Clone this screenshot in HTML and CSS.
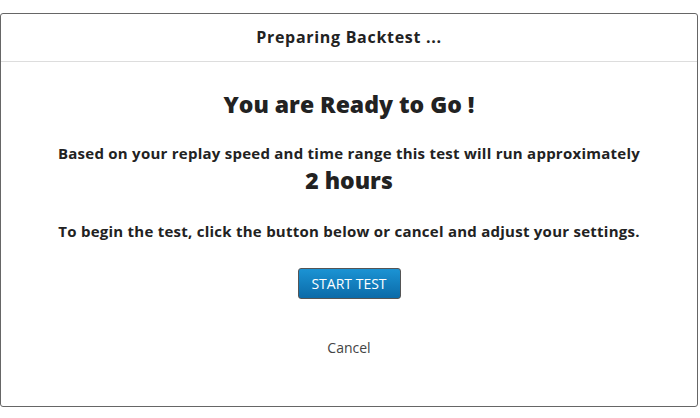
FILE: index.html
```html
<!DOCTYPE html>
<html lang="en">
<head>
    <meta charset="UTF-8">
    <meta name="viewport" content="width=device-width, initial-scale=1.0">
    <title>Preparing Backtest</title>
    <link rel="stylesheet" href="styles.css">
</head>
<body>
    <div class="modal">
        <div class="modal-header">Preparing Backtest ...</div>
        <div class="modal-body">
            <h1>You are Ready to Go !</h1>
            <p class="estimate">Based on your replay speed and time range this test will run approximately</p>
            <p class="duration">2 hours</p>
            <p class="instructions">To begin the test, click the button below or cancel and adjust your settings.</p>
            <button type="button" class="start-button">START TEST</button>
            <a href="#" class="cancel-link">Cancel</a>
        </div>
    </div>
</body>
</html>
```

FILE: styles.css
```css
body {
    font-family: "Open Sans", "Noto Sans", sans-serif;
    margin: 0;
    background: #fff;
    color: #222;
}
.modal {
    width: 696px;
    height: 392px;
    margin-top: 13px;
    border: 1px solid #666;
    border-radius: 3px;
    display: flex;
    flex-direction: column;
}
.modal-header {
    height: 48px;
    padding-bottom: 2px;
    box-sizing: border-box;
    border-bottom: 1px solid #ddd;
    display: flex;
    align-items: center;
    justify-content: center;
    font-size: 16px;
    font-weight: bold;
    color: #222;
    letter-spacing: 0.7px;
}
.modal-body {
    display: flex;
    flex-direction: column;
    align-items: center;
    text-align: center;
}
h1 {
    font-size: 23px;
    font-weight: 800;
    margin: 27px 0 0;
    line-height: 30px;
}
.estimate {
    font-size: 15px;
    font-weight: bold;
    margin: 25px 0 0;
    line-height: 18px;
    letter-spacing: 0.25px;
}
.duration {
    font-size: 23px;
    font-weight: 800;
    margin: 3px 0 0;
    line-height: 30px;
}
.instructions {
    font-size: 15px;
    font-weight: bold;
    margin: 27px 0 0;
    line-height: 18px;
    letter-spacing: 0.25px;
}
.start-button {
    margin-top: 28px;
    width: 103px;
    height: 31px;
    padding: 0;
    font-family: "Open Sans", sans-serif;
    font-size: 14px;
    color: #fff;
    background: linear-gradient(#1b93d4, #0c6ba8);
    border: 1px solid #555;
    border-radius: 3px;
    cursor: pointer;
}
.cancel-link {
    margin-top: 39px;
    font-size: 14px;
    color: #444;
    text-decoration: none;
}
```
